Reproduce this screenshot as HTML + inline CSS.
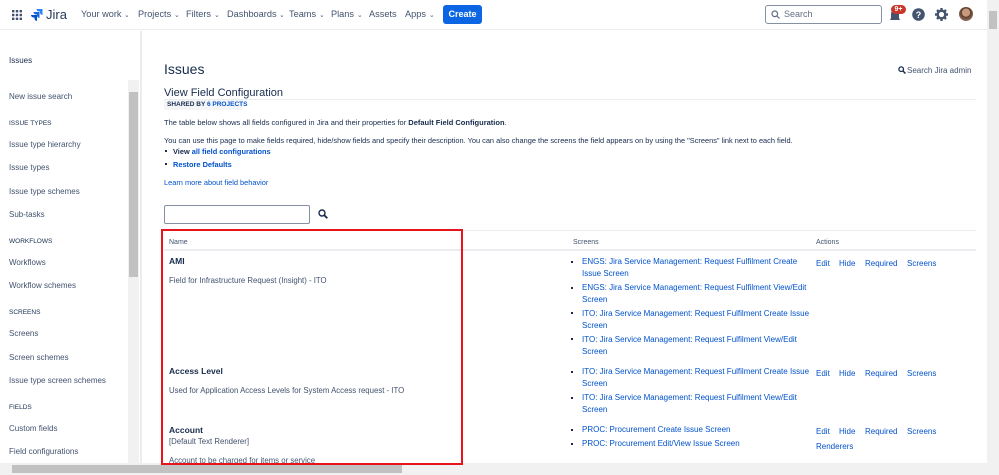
<!DOCTYPE html>
<html><head><meta charset="utf-8"><style>
*{box-sizing:border-box;margin:0;padding:0}
body{width:999px;height:475px;overflow:hidden;font-family:"Liberation Sans",sans-serif;background:#fff;color:#172b4d;position:relative;font-size:8px}
.a{position:absolute;white-space:nowrap}
.nav{color:#42526e;font-size:9.2px;top:9px}
.nav i{font-style:normal;font-size:7px;display:inline-block;transform:scaleX(0.9)}
.side{color:#42526e;font-size:8px;left:9px}
.hd{color:#172b4d;font-size:6.5px;left:9px}
.lk{color:#0052cc}
.sc{color:#0052cc;font-size:8px;line-height:12px}
.dot{position:absolute;width:2px;height:2px;background:#172b4d}
</style></head><body>
<div class="a" style="left:0;top:0;width:999px;height:30px;border-bottom:1px solid #ebecf0"></div>
<svg class="a" style="left:12px;top:10px" width="10" height="10"><g fill="#42526e"><rect x="0" y="0" width="2.4" height="2.4"/><rect x="3.8" y="0" width="2.4" height="2.4"/><rect x="7.6" y="0" width="2.4" height="2.4"/><rect x="0" y="3.8" width="2.4" height="2.4"/><rect x="3.8" y="3.8" width="2.4" height="2.4"/><rect x="7.6" y="3.8" width="2.4" height="2.4"/><rect x="0" y="7.6" width="2.4" height="2.4"/><rect x="3.8" y="7.6" width="2.4" height="2.4"/><rect x="7.6" y="7.6" width="2.4" height="2.4"/></g></svg>
<svg class="a" style="left:31px;top:8px" width="12" height="13"><path d="M11 1H5.5a2.5 2.5 0 0 0 2.5 2.5h1V4.5a2.5 2.5 0 0 0 2.5 2.5V1z" fill="#2684ff"/><path d="M8 4H2.5A2.5 2.5 0 0 0 5 6.5h1v1A2.5 2.5 0 0 0 8.5 10V4z" fill="#1868db"/><path d="M5 7H0a2.5 2.5 0 0 0 2.5 2.5h1v1A2.5 2.5 0 0 0 6 13V7z" fill="#0052cc"/></svg>
<div class="a" style="left:46px;top:7px;font-size:13px;color:#253858">Jira</div>
<div class="a nav" style="left:81px">Your work <i>⌄</i></div>
<div class="a nav" style="left:138px">Projects <i>⌄</i></div>
<div class="a nav" style="left:186px">Filters <i>⌄</i></div>
<div class="a nav" style="left:227px">Dashboards <i>⌄</i></div>
<div class="a nav" style="left:289px">Teams <i>⌄</i></div>
<div class="a nav" style="left:331px">Plans <i>⌄</i></div>
<div class="a nav" style="left:369px">Assets</div>
<div class="a nav" style="left:405px">Apps <i>⌄</i></div>
<div class="a" style="left:443px;top:5px;width:39px;height:19px;background:#0c66e4;border-radius:3px;color:#fff;font-size:9px;font-weight:bold;text-align:center;line-height:19px">Create</div>
<div class="a" style="left:765px;top:5px;width:117px;height:19px;border:1px solid #8590a2;border-radius:3px"></div>
<svg class="a" style="left:771px;top:10px" width="9" height="9"><circle cx="3.8" cy="3.8" r="2.8" fill="none" stroke="#626f86" stroke-width="1.2"/><path d="M6 6l2.5 2.5" stroke="#626f86" stroke-width="1.2"/></svg>
<div class="a" style="left:784px;top:9px;font-size:9px;color:#626f86">Search</div>
<svg class="a" style="left:889px;top:9px" width="12" height="13"><path d="M6 1a4 4 0 0 0-4 4v4L1 11h10l-1-2V5a4 4 0 0 0-4-4z" fill="#44546f"/></svg>
<div class="a" style="left:891px;top:5px;width:15px;height:9px;background:#c9372c;border-radius:5px;color:#fff;font-size:7px;font-weight:bold;text-align:center;line-height:9px">9+</div>
<svg class="a" style="left:912px;top:8px" width="13" height="13"><circle cx="6.5" cy="6.5" r="6.3" fill="#44546f"/><text x="6.5" y="10" font-size="9" font-weight="bold" text-anchor="middle" fill="#fff" font-family="Liberation Sans">?</text></svg>
<svg class="a" style="left:935px;top:8px" width="13" height="13"><circle cx="6.5" cy="6.5" r="3.8" fill="none" stroke="#44546f" stroke-width="2.4"/><g stroke="#44546f" stroke-width="2.4"><path d="M6.5 0v3M6.5 10v3M0 6.5h3M10 6.5h3M2 2l2 2M9 9l2 2M2 11l2-2M9 4l2-2"/></g></svg>
<div class="a" style="left:959px;top:7px;width:14px;height:14px;border-radius:50%;background:radial-gradient(circle at 50% 40%,#c89a7c 0 35%,#5a3b2c 40%,#8b6a58 70%)"></div>
<div class="a" style="left:987px;top:0;width:12px;height:463px;background:#f1f1f1"></div>
<div class="a" style="left:989px;top:11px;width:8px;height:18px;background:#c1c1c1"></div>
<div class="a" style="left:140px;top:31px;width:2px;height:432px;background:#ebecf0"></div>
<div class="a" style="left:128px;top:80px;width:11px;height:383px;background:#f1f1f1"></div>
<div class="a" style="left:129px;top:92px;width:9px;height:185px;background:#c1c1c1"></div>
<div class="a side" style="top:56px;color:#172b4d">Issues</div>
<div class="a side" style="top:92px">New issue search</div>
<div class="a hd" style="top:120px">ISSUE TYPES</div>
<div class="a side" style="top:140px">Issue type hierarchy</div>
<div class="a side" style="top:163px">Issue types</div>
<div class="a side" style="top:187px">Issue type schemes</div>
<div class="a side" style="top:210px">Sub-tasks</div>
<div class="a hd" style="top:238px">WORKFLOWS</div>
<div class="a side" style="top:258px">Workflows</div>
<div class="a side" style="top:281px">Workflow schemes</div>
<div class="a hd" style="top:309px">SCREENS</div>
<div class="a side" style="top:329px">Screens</div>
<div class="a side" style="top:353px">Screen schemes</div>
<div class="a side" style="top:376px">Issue type screen schemes</div>
<div class="a hd" style="top:404px">FIELDS</div>
<div class="a side" style="top:424px">Custom fields</div>
<div class="a side" style="top:447px">Field configurations</div>
<div class="a" style="left:164px;top:61px;font-size:14px;color:#172b4d">Issues</div>
<svg class="a" style="left:898px;top:66px" width="8" height="8"><circle cx="3.2" cy="3.2" r="2.3" fill="none" stroke="#172b4d" stroke-width="1.3"/><path d="M5 5l2.5 2.5" stroke="#172b4d" stroke-width="1.5"/></svg>
<div class="a" style="left:907px;top:66px;font-size:8px;color:#42526e">Search Jira admin</div>
<div class="a" style="left:164px;top:87px;font-size:11px">View Field Configuration</div>
<div class="a" style="left:164px;top:99px;width:812px;height:1px;background:#ebecf0"></div>
<div class="a" style="left:164px;top:100px;width:79px;height:10px;background:#f4f5f7"></div>
<div class="a" style="left:167px;top:101px;font-size:6.5px;font-weight:bold">SHARED BY <span class="lk">6 PROJECTS</span></div>
<div class="a" style="left:164px;top:118px;font-size:7.5px">The table below shows all fields configured in Jira and their properties for <b>Default Field Configuration</b>.</div>
<div class="a" style="left:164px;top:136px;font-size:7.4px">You can use this page to make fields required, hide/show fields and specify their description. You can also change the screens the field appears on by using the "Screens" link next to each field.</div>
<div class="dot" style="left:165px;top:150px"></div>
<div class="a" style="left:173px;top:147px;font-size:7.4px;font-weight:bold">View <span class="lk">all field configurations</span></div>
<div class="dot" style="left:165px;top:163px"></div>
<div class="a lk" style="left:173px;top:160px;font-size:7.4px;font-weight:bold">Restore Defaults</div>
<div class="a lk" style="left:164px;top:178px;font-size:7.4px">Learn more about field behavior</div>
<div class="a" style="left:164px;top:205px;width:146px;height:19px;border:1px solid #8590a2;border-radius:2px"></div>
<svg class="a" style="left:318px;top:209px" width="10" height="10"><circle cx="4" cy="4" r="3" fill="none" stroke="#172b4d" stroke-width="1.4"/><path d="M6.3 6.3l3 3" stroke="#172b4d" stroke-width="1.8"/></svg>
<div class="a" style="left:164px;top:230px;width:812px;height:1px;background:#ebecf0"></div>
<div class="a" style="left:164px;top:249px;width:812px;height:2px;background:#ebecf0"></div>
<div class="a" style="left:169px;top:239px;font-size:7px;color:#42526e">Name</div>
<div class="a" style="left:573px;top:239px;font-size:7px;color:#42526e">Screens</div>
<div class="a" style="left:816px;top:239px;font-size:7px;color:#42526e">Actions</div>
<div class="a" style="left:169px;top:256px;font-size:8.5px;font-weight:bold">AMI</div>
<div class="a" style="left:169px;top:276px;font-size:7.8px;color:#42526e">Field for Infrastructure Request (Insight) - ITO</div>
<div class="a" style="left:169px;top:366px;font-size:8.5px;font-weight:bold">Access Level</div>
<div class="a" style="left:169px;top:386px;font-size:7.8px;color:#42526e">Used for Application Access Levels for System Access request - ITO</div>
<div class="a" style="left:169px;top:425px;font-size:8.5px;font-weight:bold">Account</div>
<div class="a" style="left:169px;top:437px;font-size:7.8px;color:#42526e">[Default Text Renderer]</div>
<div class="a" style="left:169px;top:456px;font-size:7.8px;color:#42526e">Account to be charged for items or service</div>
<div class="a" style="left:582px;top:256px">
<div class="sc">ENGS: Jira Service Management: Request Fulfilment Create<br>Issue Screen</div>
<div class="sc" style="margin-top:2px">ENGS: Jira Service Management: Request Fulfilment View/Edit<br>Screen</div>
<div class="sc" style="margin-top:2px">ITO: Jira Service Management: Request Fulfilment Create Issue<br>Screen</div>
<div class="sc" style="margin-top:2px">ITO: Jira Service Management: Request Fulfilment View/Edit<br>Screen</div>
</div>
<div class="a" style="left:582px;top:366px">
<div class="sc">ITO: Jira Service Management: Request Fulfilment Create Issue<br>Screen</div>
<div class="sc" style="margin-top:2px">ITO: Jira Service Management: Request Fulfilment View/Edit<br>Screen</div>
</div>
<div class="a" style="left:582px;top:424px">
<div class="sc">PROC: Procurement Create Issue Screen</div>
<div class="sc" style="margin-top:2px">PROC: Procurement Edit/View Issue Screen</div>
</div>
<div class="dot" style="left:571px;top:261px"></div><div class="dot" style="left:571px;top:287px"></div><div class="dot" style="left:571px;top:312px"></div><div class="dot" style="left:571px;top:338px"></div>
<div class="dot" style="left:571px;top:371px"></div><div class="dot" style="left:571px;top:397px"></div>
<div class="dot" style="left:571px;top:429px"></div><div class="dot" style="left:571px;top:443px"></div>
<div class="a sc" style="left:816px;top:258px">Edit</div><div class="a sc" style="left:839px;top:258px">Hide</div><div class="a sc" style="left:865px;top:258px">Required</div><div class="a sc" style="left:907px;top:258px">Screens</div>
<div class="a sc" style="left:816px;top:368px">Edit</div><div class="a sc" style="left:839px;top:368px">Hide</div><div class="a sc" style="left:865px;top:368px">Required</div><div class="a sc" style="left:907px;top:368px">Screens</div>
<div class="a sc" style="left:816px;top:426px">Edit</div><div class="a sc" style="left:839px;top:426px">Hide</div><div class="a sc" style="left:865px;top:426px">Required</div><div class="a sc" style="left:907px;top:426px">Screens</div>
<div class="a sc" style="left:816px;top:441px">Renderers</div>
<div class="a" style="left:161px;top:229px;width:302px;height:236px;border:2px solid #e8141b"></div>
<div class="a" style="left:0;top:463px;width:999px;height:12px;background:#f1f1f1"></div>
<div class="a" style="left:12px;top:465px;width:390px;height:8px;background:#c1c1c1"></div>
<div class="a" style="left:161px;top:463px;width:302px;height:2px;background:#e8141b"></div>
</body></html>
